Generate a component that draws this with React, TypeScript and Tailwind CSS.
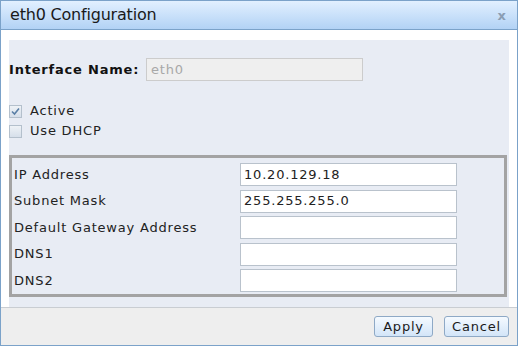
import React from 'react';

const font = { fontFamily: '"DejaVu Sans", Verdana, sans-serif' };

const rows = [
  { label: 'IP Address', value: '10.20.129.18' },
  { label: 'Subnet Mask', value: '255.255.255.0' },
  { label: 'Default Gateway Address', value: '' },
  { label: 'DNS1', value: '' },
  { label: 'DNS2', value: '' },
];

const CheckRow: React.FC<{ label: string; checked?: boolean }> = ({ label, checked }) => (
  <div className="flex items-center h-[20px]">
    <div className="w-[13px] h-[13px] border border-[#b4c0cc] bg-gradient-to-b from-[#eef2f6] to-[#d6dfea] flex items-center justify-center">
      {checked && (
        <svg width="9" height="9" viewBox="0 0 9 9">
          <path d="M1 4.5 L3.5 7 L8 1.5" fill="none" stroke="#5a7fa6" strokeWidth="1.6" />
        </svg>
      )}
    </div>
    <span className="ml-[8px] text-[13px] tracking-[0.8px] text-[#222]">{label}</span>
  </div>
);

export default function App() {
  return (
    <div style={font} className="w-[518px] h-[346px] flex flex-col bg-white border border-[#7ba2c9] text-[#1e1e1e]">
      <div className="h-[29px] shrink-0 flex items-center justify-between pl-[9px] pr-[11px] bg-gradient-to-b from-[#e2f0ff] to-[#b2d2f5] border-b border-[#7ba2c9]">
        <span className="text-[16px] tracking-[-0.2px] text-[#1a1a1a]">eth0 Configuration</span>
        <span className="text-[13px] font-bold text-[#8b9db3] leading-none">x</span>
      </div>

      <div className="flex-1 pl-[8px] pr-[8px] pt-[10px]">
        <div className="h-full bg-[#e8ecf4] pt-[18px]">
          <div className="flex items-center">
            <span className="text-[13px] font-bold tracking-[0.8px] text-[#111] w-[137px]">Interface Name:</span>
            <div className="w-[217px] h-[23px] border border-[#cccccc] bg-[#efefef] text-[13px] tracking-[0.8px] text-[#a8a8a8] pl-[4px] flex items-center">
              eth0
            </div>
          </div>

          <div className="mt-[20px]">
            <CheckRow label="Active" checked />
            <CheckRow label="Use DHCP" />
          </div>

          <div className="mt-[14px] w-[498px] border-[3px] border-[#a3a3a3] pt-[5px] pb-[2px] pl-[2px] flex flex-col gap-[3.5px]">
            {rows.map(r => (
              <div key={r.label} className="flex items-center">
                <span className="w-[226px] text-[13px] tracking-[0.8px] text-[#222]">{r.label}</span>
                <div className="w-[217px] h-[23px] border border-[#b9c2cc] bg-white text-[13px] tracking-[0.8px] text-[#222] pl-[3px] flex items-center">
                  {r.value}
                </div>
              </div>
            ))}
          </div>
        </div>
      </div>

      <div className="h-[38px] shrink-0 bg-[#eeeeee] border-t border-[#c9cdd2] flex items-center justify-end gap-[11px] pr-[8px]">
        <button className="w-[59px] h-[21px] rounded-[3px] border border-[#8ea9c6] bg-gradient-to-b from-[#f5faff] to-[#d3e5f8] text-[13px] tracking-[0.8px] text-[#1a1a1a]">
          Apply
        </button>
        <button className="w-[65px] h-[21px] rounded-[3px] border border-[#8ea9c6] bg-gradient-to-b from-[#f5faff] to-[#d3e5f8] text-[13px] tracking-[0.8px] text-[#1a1a1a]">
          Cancel
        </button>
      </div>
    </div>
  );
}
